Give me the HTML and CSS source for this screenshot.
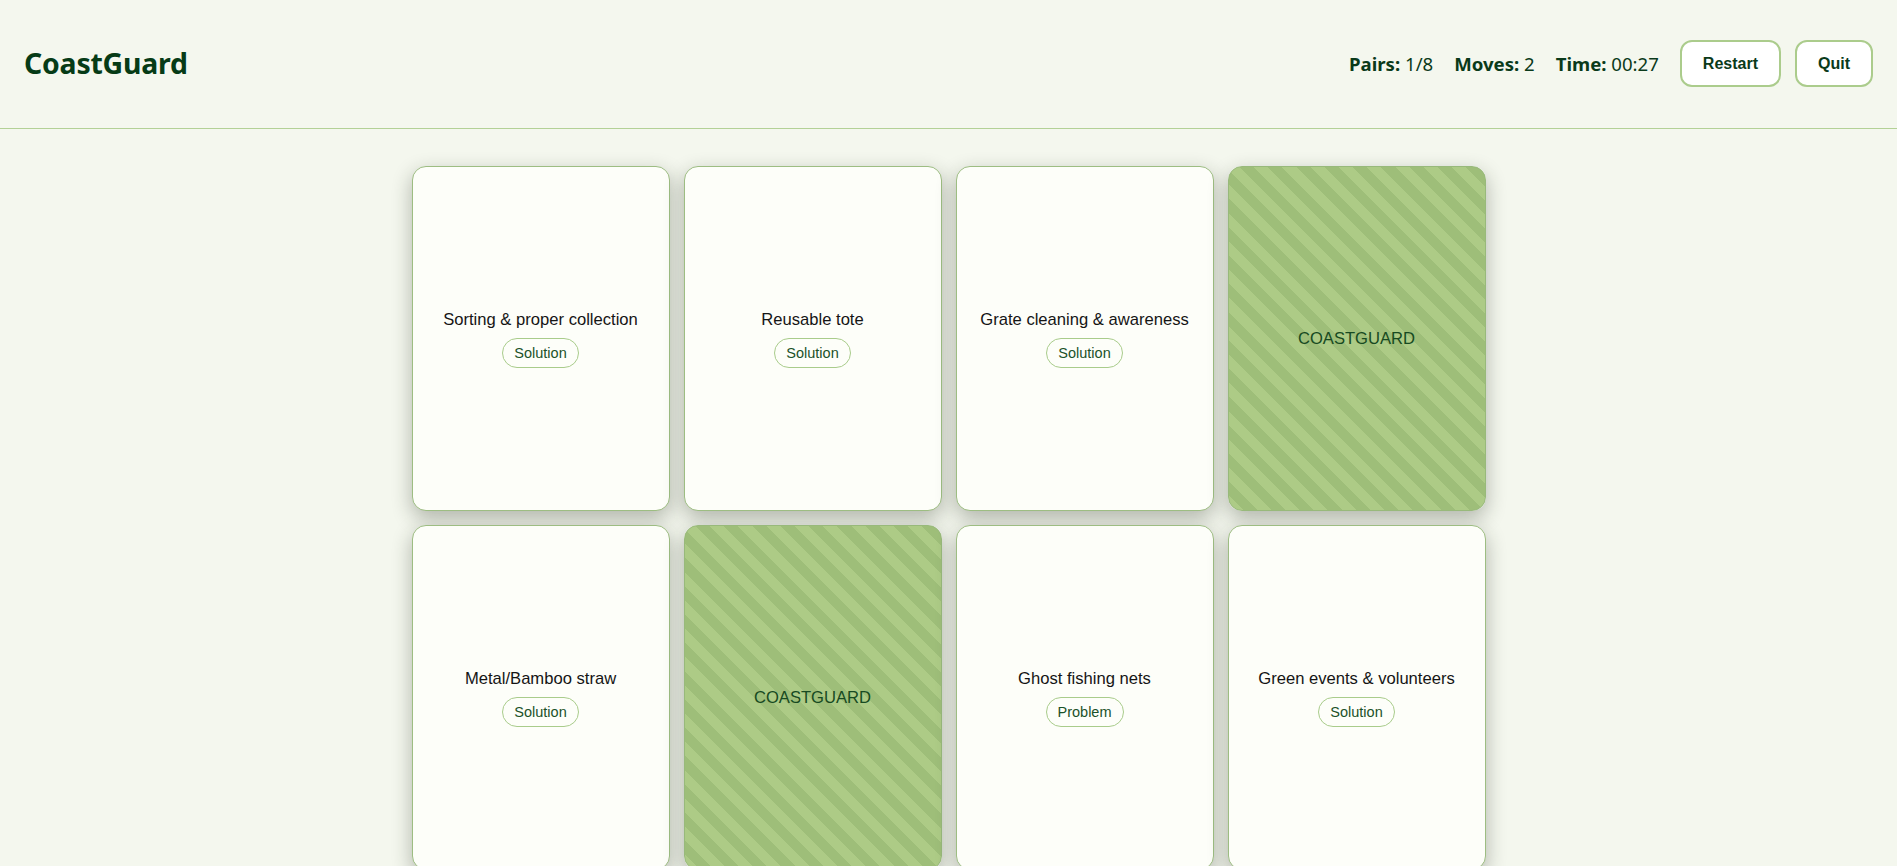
FILE: index.html
```html
<!DOCTYPE html>
<html lang="en">
<head>
<meta charset="utf-8">
<title>CoastGuard</title>
<link rel="stylesheet" href="styles.css">
</head>
<body>
<header class="topbar">
  <div class="logo">CoastGuard</div>
  <div class="hud">
    <div class="stat"><b>Pairs:</b> 1/8</div>
    <div class="stat"><b>Moves:</b> 2</div>
    <div class="stat"><b>Time:</b> 00:27</div>
    <button class="btn">Restart</button>
    <button class="btn">Quit</button>
  </div>
</header>
<main class="board">
  <div class="card face"><div class="title">Sorting &amp; proper collection</div><span class="tag">Solution</span></div>
  <div class="card face"><div class="title">Reusable tote</div><span class="tag">Solution</span></div>
  <div class="card face"><div class="title">Grate cleaning &amp; awareness</div><span class="tag">Solution</span></div>
  <div class="card back"><div class="brand">COASTGUARD</div></div>
  <div class="card face"><div class="title">Metal/Bamboo straw</div><span class="tag">Solution</span></div>
  <div class="card back"><div class="brand">COASTGUARD</div></div>
  <div class="card face"><div class="title">Ghost fishing nets</div><span class="tag">Problem</span></div>
  <div class="card face"><div class="title">Green events &amp; volunteers</div><span class="tag">Solution</span></div>
</main>
</body>
</html>
```

FILE: styles.css
```css
* { box-sizing: border-box; }
html, body { margin: 0; padding: 0; }
body {
  background: #f4f7ee;
  color: #0a3a1a;
  font-family: "Liberation Sans", Arial, sans-serif;
  overflow: hidden;
  height: 866px;
}
.topbar {
  height: 129px;
  border-bottom: 1px solid #b3d196;
  display: flex;
  align-items: center;
  justify-content: space-between;
  padding: 0 24px 2px 24px;
}
.logo {
  font-family: "Noto Sans", "Open Sans", sans-serif;
  font-weight: 700;
  font-size: 28.4px;
  color: #063b16;
  letter-spacing: -0.2px;
}
.hud {
  display: flex;
  align-items: center;
  gap: 0;
}
.stat {
  font-family: "Noto Sans", "Open Sans", sans-serif;
  font-size: 18.6px;
  color: #0a3a1a;
  margin-right: 21px;
}
.stat b { font-weight: 700; }
.btn {
  font-family: "Liberation Sans", Arial, sans-serif;
  font-weight: 700;
  font-size: 16px;
  color: #0a3a1a;
  background: #ffffff;
  border: 2px solid #abcc8c;
  border-radius: 12px;
  height: 47px;
  padding: 0 21px;
  line-height: 19px;
  cursor: pointer;
}
.btn + .btn { margin-left: 14px; }
.board {
  display: grid;
  grid-template-columns: repeat(4, 258px);
  grid-auto-rows: 345px;
  gap: 14px;
  justify-content: center;
  padding-top: 37px;
}
.card {
  border-radius: 14px;
  box-shadow: 0 7px 20px rgba(30, 40, 25, 0.32);
  display: flex;
  flex-direction: column;
  align-items: center;
  justify-content: center;
  gap: 8px;
}
.face {
  background: #fdfef9;
  border: 1px solid #9dbd82;
}
.back {
  border: 1px solid #98b97b;
  background: repeating-linear-gradient(45deg, #adcb86 0 10px, #9ebe79 10px 20px);
}
.title {
  font-size: 16.6px;
  color: #151515;
  text-align: center;
}
.tag {
  font-size: 14.5px;
  color: #1b5229;
  border: 1px solid #a9cc8b;
  border-radius: 999px;
  padding: 6px 11px;
  line-height: 16px;
  background: #fdfef9;
}
.brand {
  font-size: 16.6px;
  color: #174a22;
}
```
